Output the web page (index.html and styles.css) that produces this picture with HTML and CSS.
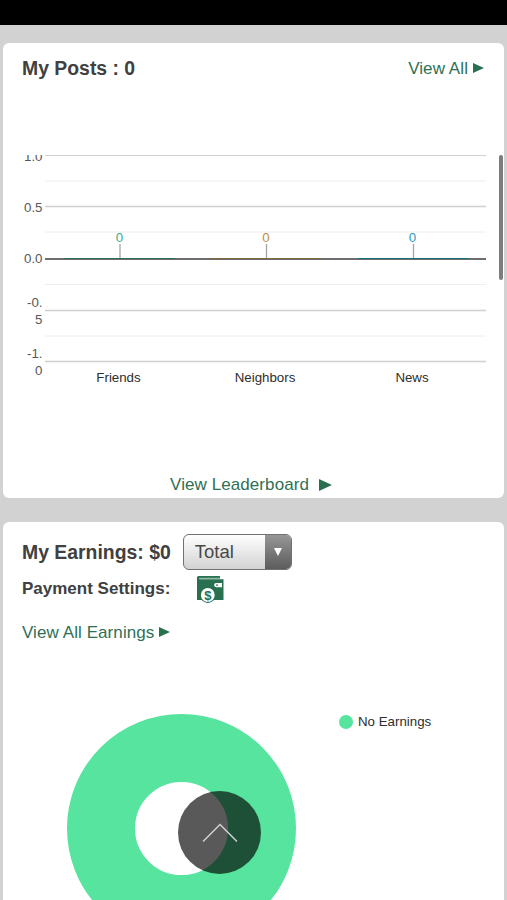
FILE: index.html
```html
<!DOCTYPE html>
<html lang="en">
<head>
  <meta charset="UTF-8" />
  <meta name="viewport" content="width=device-width, initial-scale=1" />
  <title>Dashboard</title>
  <link rel="stylesheet" href="styles.css">
</head>
<body>

  <div class="status-bar"></div>

  <div class="container">
    <div class="card posts">
      <div class="card-header">
        <h2 class="posts-title">My Posts : 0</h2>
        <a href="#" class="link view-all"><span>View All</span><i class="arrow"></i></a>
      </div>

      <div class="chart-scroll">
        <svg class="chart" width="501" height="240" viewBox="0 0 501 240">
          <g class="minor">
            <path d="M42 26H483M42 77H483M42 129.500H483M42 181H483" />
          </g>
          <g class="major">
            <path d="M42 .2H483M42 51.500H483M42 155.500H483M42 206.500H483" />
          </g>
          <path class="baseline" d="M42 104H483" />
          <path d="M61 103.500H172" stroke="#2c6e56" />
          <path d="M208 103.500H319" stroke="#80683a" />
          <path d="M355 103.500H466" stroke="#14727c" />
          <path class="tick" d="M117 89V103M263.500 89V103M410.500 89V103" />
          <g class="axis-y">
            <text x="39.500" y="5.500">1.0</text>
            <text x="39.500" y="56.500">0.5</text>
            <text x="39.500" y="108">0.0</text>
            <text x="39.500" y="151.500">-0.</text>
            <text x="39.500" y="168.500">5</text>
            <text x="39.500" y="203">-1.</text>
            <text x="39.500" y="220">0</text>
          </g>
          <g class="values">
            <text x="116.500" y="87" fill="#3fae88">0</text>
            <text x="263" y="87" fill="#c08f35">0</text>
            <text x="409.500" y="87" fill="#2f9bbb">0</text>
          </g>
          <g class="axis-x">
            <text x="115.500" y="227">Friends</text>
            <text x="262" y="227">Neighbors</text>
            <text x="409" y="227">News</text>
          </g>
        </svg>
        <div class="scroll-thumb"></div>
      </div>

      <a href="#" class="link leaderboard"><span>View Leaderboard</span><i class="arrow"></i></a>
    </div>

    <div class="card earnings">
      <div class="earnings-row">
        <h2 class="earnings-title">My Earnings: $0</h2>
        <button class="period"><span class="period-label">Total</span><span class="period-toggle"></span></button>
      </div>
      <div class="payment-row">
        <h3>Payment Settings:</h3>
        <svg class="wallet" width="28" height="29" viewBox="0 0 28 29">
          <path fill="#28704f" d="M2.500 1H24V3H3.500V4.200H27.500V25H1V2.500Q1 1 2.500 1Z" />
          <path fill="#8fb8a5" d="M3.500 2.700H24V3.900H3.500Z" />
          <path fill="#fff" d="M20.200 8H26V12.200H20.200A2.100 2.100 0 0 1 20.200 8Z" />
          <circle cx="21" cy="10.100" r=".9" fill="#28704f" />
          <circle cx="11.800" cy="20" r="7.900" fill="#28704f" />
          <circle cx="11.800" cy="20" r="6.900" fill="#fff" />
          <text x="11.800" y="24.600" class="wallet-sign">$</text>
        </svg>
      </div>
      <a href="#" class="link all-earnings"><span>View All Earnings</span><i class="arrow"></i></a>

      <div class="donut-row">
        <div class="donut"></div>
        <div class="legend"><i class="legend-dot"></i><span>No Earnings</span></div>
      </div>
    </div>
  </div>

  <button class="to-top" aria-label="Back to top">
    <svg width="36" height="20" viewBox="0 0 36 20">
      <path d="M1 18.500L18 1.500L35 18.500" fill="none" stroke="#d0d0d0" stroke-width="1.500" />
    </svg>
  </button>

</body>
</html>
```
FILE: styles.css
```css
* {
  box-sizing: border-box;
}

body {
  font-family: "Liberation Sans", Arial, sans-serif;
  margin: 0;
  height: 900px;
  overflow: hidden;
  background-color: #d2d2d2;
  color: #404040;
}

.status-bar {
  height: 25px;
  background-color: #000;
}

.container {
  padding: 18px 3px 0;
}

.card {
  background: white;
  border-radius: 6px;
  overflow: hidden;
}

h2, h3 {
  margin: 0;
  font-weight: bold;
  white-space: nowrap;
}

h2 {
  font-size: 19.4px;
  line-height: 24px;
}

.link {
  display: flex;
  align-items: center;
  color: #2f7055;
  font-size: 17px;
  letter-spacing: 0.08px;
  line-height: 20px;
  text-decoration: none;
  white-space: nowrap;
}

.arrow {
  border-left: 11px solid #28704f;
  border-top: 5.5px solid transparent;
  border-bottom: 5.5px solid transparent;
}

/* posts */
.posts {
  height: 454.5px;
  margin-bottom: 24.5px;
}

.card-header {
  display: flex;
  justify-content: space-between;
  align-items: center;
  padding: 13px 20px 0 19px;
}

.view-all {
  gap: 5px;
  padding-top: 1px;
}

.view-all .arrow,
.all-earnings .arrow {
  margin-top: -2px;
}

.chart-scroll {
  position: relative;
  margin-top: 75px;
  height: 240px;
}

.chart {
  display: block;
  overflow: hidden;
  font-size: 13.3px;
}

.minor {
  stroke: #eee;
}

.major {
  stroke: #d0d0d0;
  stroke-width: 1.5;
}

.baseline {
  stroke: #6e6e6e;
  stroke-width: 1.8;
}

.tick {
  stroke: #a5a5a5;
  stroke-width: 1.3;
}

.axis-y {
  fill: #585858;
  text-anchor: end;
}

.axis-x {
  fill: #2d2d2d;
  text-anchor: middle;
}

.values {
  text-anchor: middle;
}

.scroll-thumb {
  position: absolute;
  top: 0;
  right: 1px;
  width: 4px;
  height: 125px;
  border-radius: 2px;
  background: #7d7d7d;
}

.leaderboard {
  justify-content: center;
  gap: 10px;
  margin-top: 80px;
  padding-right: 5px;
}

.leaderboard .arrow {
  border-left-width: 13px;
  border-top-width: 6px;
  border-bottom-width: 6px;
}

/* earnings */
.earnings {
  height: 420px;
  padding: 12px 19px 0;
}

.earnings-row {
  display: flex;
  align-items: center;
  gap: 12px;
}

.period {
  display: flex;
  width: 109px;
  height: 36px;
  padding: 0;
  border: 1.5px solid #717171;
  border-radius: 6px;
  overflow: hidden;
  background: linear-gradient(#fff, #d2d2d2);
  font-family: inherit;
  font-size: 18.5px;
  color: #484848;
}

.period-label {
  flex: 1;
  padding-left: 11px;
  text-align: left;
  line-height: 34px;
}

.period-toggle {
  display: flex;
  align-items: center;
  justify-content: center;
  width: 26px;
  height: 100%;
  background: linear-gradient(#969696, #5c5c5c);
}

.period-toggle::before {
  content: "";
  border-top: 8px solid #fff;
  border-left: 4.5px solid transparent;
  border-right: 4.5px solid transparent;
}

.payment-row {
  display: flex;
  align-items: center;
  gap: 26px;
  margin-top: 5px;
}

h3 {
  font-size: 17px;
  line-height: 20px;
  margin-top: -1px;
}

.wallet-sign {
  font-size: 13px;
  font-weight: bold;
  text-anchor: middle;
  fill: #28704f;
}

.all-earnings {
  gap: 5px;
  margin-top: 19px;
}

.donut-row {
  display: flex;
  align-items: flex-start;
  margin-top: 71px;
  padding-left: 45px;
}

.donut {
  width: 229px;
  height: 229px;
  flex: none;
  border: 68px solid #56e49f;
  border-radius: 50%;
}

.legend {
  display: flex;
  align-items: center;
  gap: 5px;
  margin-left: 43px;
  font-size: 13.3px;
  line-height: 16px;
  color: #2d2d2d;
}

.legend-dot {
  width: 14px;
  height: 14px;
  border-radius: 50%;
  background: #56e49f;
}

.to-top {
  position: fixed;
  left: 178px;
  top: 791px;
  width: 83px;
  height: 83px;
  padding: 0;
  border: none;
  border-radius: 50%;
  background: rgba(0, 0, 0, 0.65);
  display: flex;
  align-items: center;
  justify-content: center;
}
```
